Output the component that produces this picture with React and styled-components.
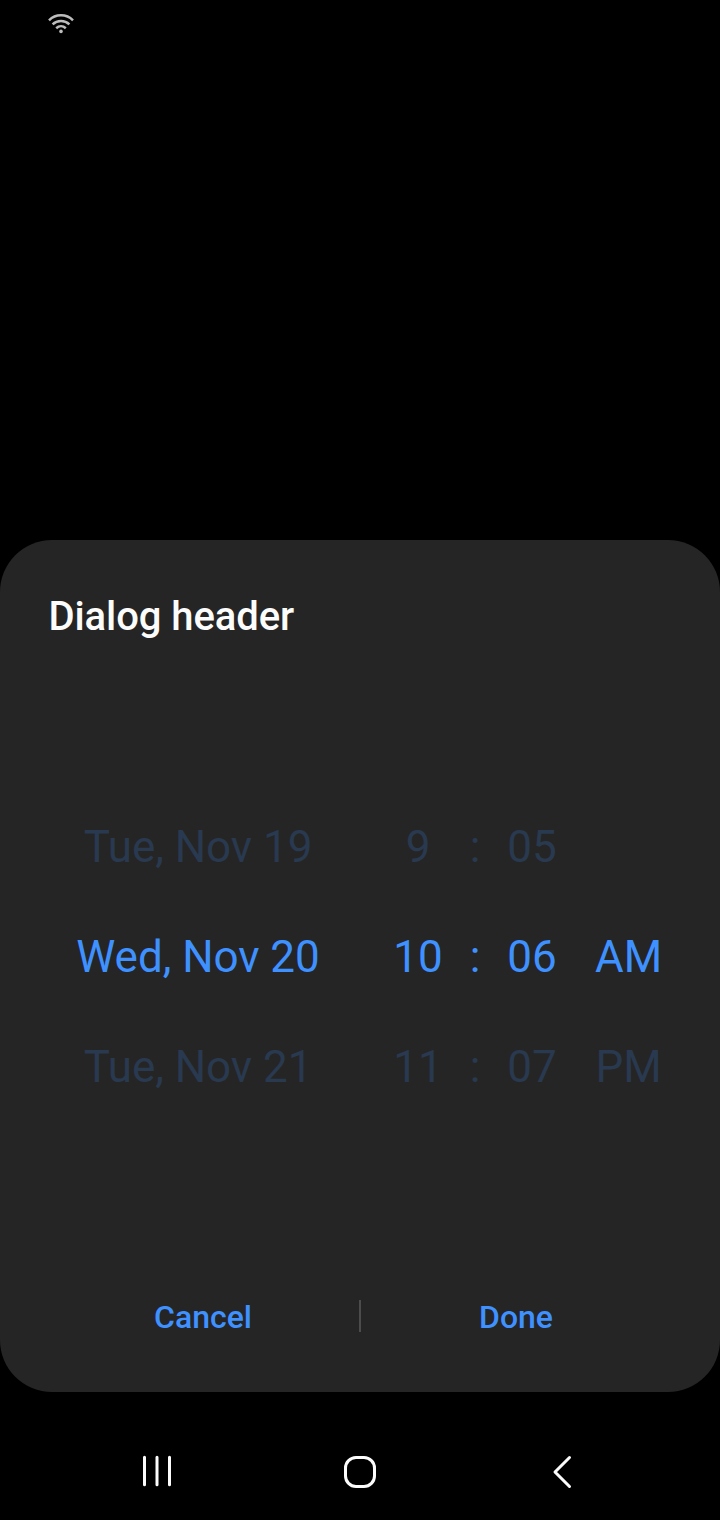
import React from "react";
import styled, { createGlobalStyle } from "styled-components";

const Global = createGlobalStyle`
  * { box-sizing: border-box; }
  html, body { margin: 0; background: #000; }
`;

const Screen = styled.div`
  width: 720px;
  height: 1520px;
  display: flex;
  flex-direction: column;
  background: #000;
  font-family: Roboto, sans-serif;
  overflow: hidden;
`;

const StatusBar = styled.header`
  height: 540px;
  padding: 14px 48px;
`;

const Dialog = styled.section`
  height: 852px;
  padding-top: 49px;
  border-radius: 52px;
  background: #252525;
  display: flex;
  flex-direction: column;
`;

const Title = styled.h1`
  margin: 0;
  padding-left: 48.4px;
  font-size: 40px;
  line-height: 56px;
  font-weight: 500;
  letter-spacing: -0.07px;
  color: #fcfcfc;
`;

const Picker = styled.div`
  margin-top: 147px;
  height: 330px;
`;

const Row = styled.div`
  height: 110px;
  display: grid;
  grid-template-columns: 340px 80px 34px 80px 113px;
  padding-left: 38px;
  align-items: center;
  text-align: center;
  white-space: nowrap;
  font-size: 44px;
  letter-spacing: -0.05px;
  color: ${(p) => (p.$selected ? "#3e91ff" : "#29394f")};
`;

const DateCell = styled.span`
  padding-right: 20px;
`;

const Actions = styled.footer`
  margin-top: 140px;
  height: 108px;
  padding: 0 46px;
  display: flex;
  align-items: center;
`;

const Action = styled.button`
  width: 313px;
  border: 0;
  padding: ${(p) => (p.$end ? "2px 3px 0 0" : "2px 0 0 1px")};
  background: none;
  font: 500 32px/40px Roboto, sans-serif;
  color: #3e91ff;
`;

const Divider = styled.span`
  width: 2px;
  height: 32px;
  background: #4c4c4c;
`;

const NavBar = styled.nav`
  height: 128px;
  padding: 48px 128px 0;
  display: flex;
  justify-content: space-between;
`;

const Icon = styled.svg`
  display: block;
  fill: none;
  stroke: ${(p) => p.$color || "#fcfcfc"};
`;

const rows = [
  ["Tue, Nov 19", "9", "05", ""],
  ["Wed, Nov 20", "10", "06", "AM"],
  ["Tue, Nov 21", "11", "07", "PM"],
];

export default function App() {
  return (
    <Screen>
      <Global />
      <StatusBar>
        <Icon width="26" height="20" viewBox="0 0 26 20" $color="#bdbdbd" strokeWidth="2.5">
          <path d="M1 6.300C7.600-.3 18.400-.3 25 6.300M4.600 10.300c4.700-4.400 12.100-4.400 16.800 0M8.200 14.200c2.800-2.500 6.800-2.500 9.600 0" />
          <circle cx="13" cy="17.400" r="1.800" fill="#bdbdbd" stroke="none" />
        </Icon>
      </StatusBar>
      <Dialog>
        <Title>Dialog header</Title>
        <Picker>
          {rows.map(([date, hour, minute, period], i) => (
            <Row key={date} $selected={i === 1}>
              <DateCell>{date}</DateCell>
              <span>{hour}</span>
              <span>:</span>
              <span>{minute}</span>
              <span>{period}</span>
            </Row>
          ))}
        </Picker>
        <Actions>
          <Action>Cancel</Action>
          <Divider />
          <Action $end>Done</Action>
        </Actions>
      </Dialog>
      <NavBar>
        <Icon width="60" height="60" viewBox="0 0 60 60" strokeWidth="3" strokeLinecap="round">
          <path d="M16.500 17.300v27.400M29 17.300v27.400M41.500 17.300v27.400" />
        </Icon>
        <Icon width="60" height="60" viewBox="0 0 60 60" strokeWidth="3">
          <rect x="15.500" y="17.500" width="29" height="29" rx="10.500" />
        </Icon>
        <Icon width="60" height="60" viewBox="0 0 60 60" strokeWidth="3" strokeLinecap="round" strokeLinejoin="round">
          <path d="M37.500 17.500 23 32l14.500 14.500" />
        </Icon>
      </NavBar>
    </Screen>
  );
}
